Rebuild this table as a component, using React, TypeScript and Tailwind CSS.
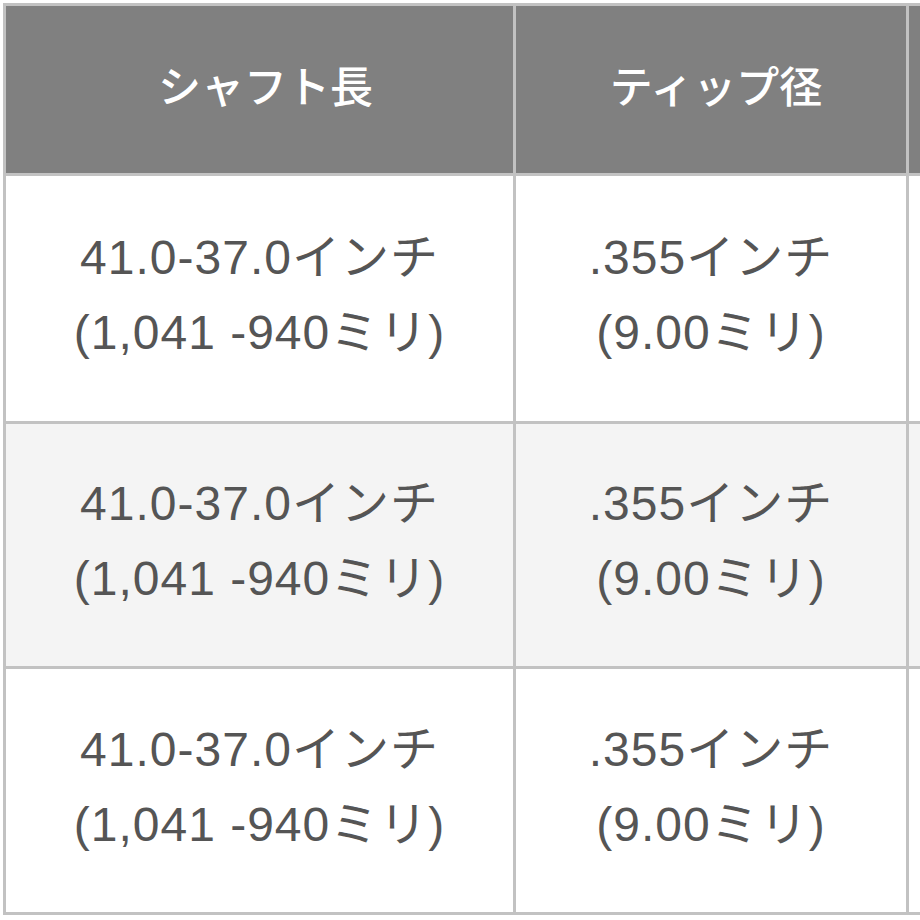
import React from "react";

const font = { fontFamily: '"Liberation Sans", "Noto Sans CJK JP", sans-serif' };

function Cell({ bg, l1, l2 }: { bg: string; l1: string; l2: string }) {
  return (
    <div className={`${bg} flex flex-col items-center justify-center text-[48px] tracking-[1px] leading-[75px] text-[#555555] pb-[8px]`}>
      <div className="whitespace-nowrap">{l1}</div>
      <div className="whitespace-nowrap">{l2}</div>
    </div>
  );
}

export default function App() {
  const rows = ["bg-white", "bg-[#f4f4f4]", "bg-white"];
  return (
    <div className="w-[920px] h-[920px] overflow-hidden bg-white pt-[3px] pl-[3px]" style={font}>
      <div className="grid w-[1300px] grid-cols-[507px_390px_400px] grid-rows-[167px_245px_242px_243px] gap-[3px] bg-[#c2c2c2] p-[3px]">
        <div className="bg-[#808080] flex items-center justify-center text-white text-[43px] font-medium pl-[12px] pb-[2px]">シャフト長</div>
        <div className="bg-[#808080] flex items-center justify-center text-white text-[43px] font-medium pl-[10px] pb-[2px]">ティップ径</div>
        <div className="bg-[#808080]"></div>
        {rows.map((bg, i) => (
          <React.Fragment key={i}>
            <Cell bg={bg} l1="41.0-37.0インチ" l2="(1,041 -940ミリ)" />
            <Cell bg={bg} l1=".355インチ" l2="(9.00ミリ)" />
            <div className={bg}></div>
          </React.Fragment>
        ))}
      </div>
    </div>
  );
}
